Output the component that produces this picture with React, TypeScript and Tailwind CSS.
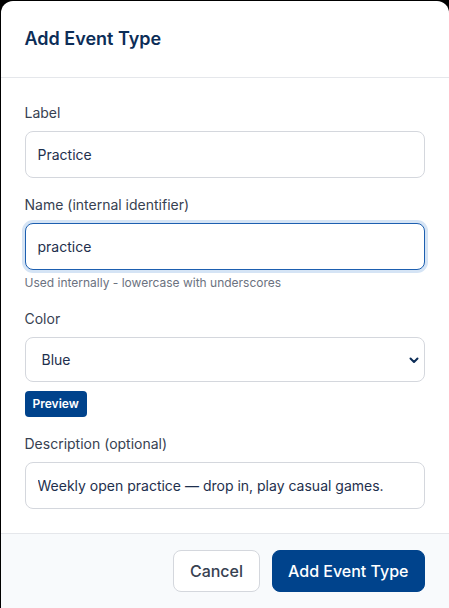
import { useState } from "react";

const inputBase =
  "block w-full rounded-lg border bg-white px-3 py-[11px] text-sm leading-[23px] text-[#1e2f4d] outline-none";

const labelCls = "mb-2 block text-sm leading-[21px] font-normal text-[#374151]";

export default function App() {
  const [label, setLabel] = useState("Practice");
  const [name, setName] = useState("practice");
  const [color, setColor] = useState("blue");
  const [description, setDescription] = useState(
    "Weekly open practice — drop in, play casual games."
  );

  return (
    <div className="min-h-screen bg-black font-['Inter',sans-serif]">
      <div className="mx-auto w-[448px] pt-px">
        <div className="overflow-hidden rounded-t-xl bg-white">
          {/* Header */}
          <div className="border-b border-[#e5e7eb] px-6 py-6">
            <h2 className="text-lg leading-7 font-semibold text-[#0c2d57]">Add Event Type</h2>
          </div>

          {/* Body */}
          <div className="flex flex-col gap-4 p-6">
            <div>
              <label className={labelCls}>Label</label>
              <input
                className={`${inputBase} border-[#d4d7dd]`}
                value={label}
                onChange={(e) => setLabel(e.target.value)}
              />
            </div>

            <div>
              <label className={labelCls}>Name (internal identifier)</label>
              <input
                className={`${inputBase} border-[#1d5fb0] ring-[3px] ring-[#d5e4f5]`}
                value={name}
                onChange={(e) => setName(e.target.value)}
              />
              <p className="mt-1 text-xs leading-[18px] text-[#6b7280]">
                Used internally - lowercase with underscores
              </p>
            </div>

            <div>
              <label className={labelCls}>Color</label>
              <div className="relative">
                <select
                  className="block h-[45px] w-full appearance-none rounded-lg border border-[#d4d7dd] bg-white pr-10 pl-4 text-sm text-[#1e2f4d] outline-none"
                  value={color}
                  onChange={(e) => setColor(e.target.value)}
                >
                  <option value="blue">Blue</option>
                  <option value="green">Green</option>
                  <option value="red">Red</option>
                  <option value="purple">Purple</option>
                </select>
                <svg
                  className="pointer-events-none absolute top-1/2 right-[5px] h-3 w-3 -translate-y-1/2 text-[#0c2d57]"
                  viewBox="0 0 12 12"
                  fill="none"
                  stroke="currentColor"
                  strokeWidth="2"
                  strokeLinecap="round"
                  strokeLinejoin="round"
                >
                  <path d="M2.5 4.5 6 8l3.5-3.5" />
                </svg>
              </div>
              <span className="mt-[9px] inline-block rounded bg-[#00438c] px-2 py-1 text-xs leading-[18px] font-semibold text-white">
                Preview
              </span>
            </div>

            <div>
              <label className={labelCls}>Description (optional)</label>
              <input
                className={`${inputBase} border-[#d4d7dd]`}
                value={description}
                onChange={(e) => setDescription(e.target.value)}
              />
            </div>
          </div>

          {/* Footer */}
          <div className="flex justify-end gap-3 border-t border-[#e5e7eb] bg-[#f8fafc] px-6 pt-4 pb-6">
            <button className="rounded-lg border border-[#d4d7dd] bg-white px-4 py-2 text-base leading-6 font-medium text-[#374151]">
              Cancel
            </button>
            <button className="rounded-lg border border-[#00438c] bg-[#00438c] px-[15px] py-2 text-base leading-6 font-medium text-white">
              Add Event Type
            </button>
          </div>
        </div>
      </div>
    </div>
  );
}
